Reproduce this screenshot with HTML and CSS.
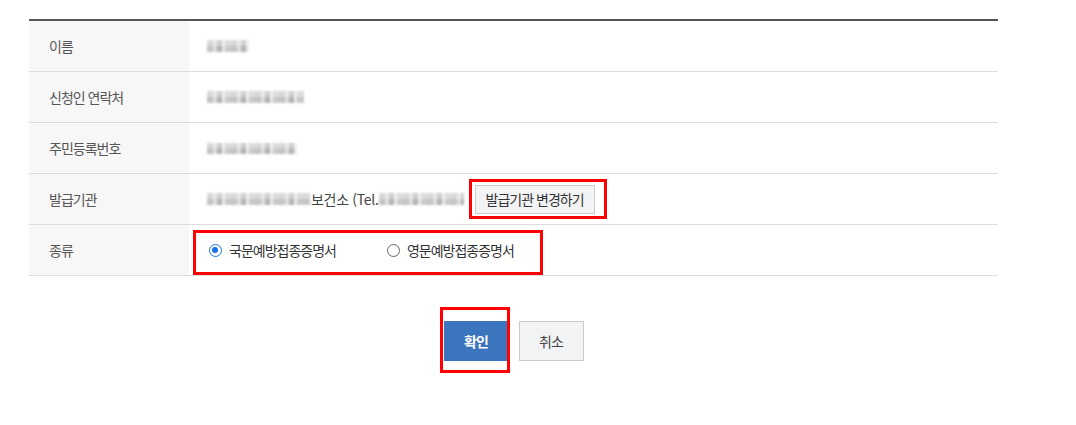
FILE: index.html
```html
<!DOCTYPE html>
<html lang="ko">
<head>
<meta charset="utf-8">
<link rel="stylesheet" href="styles.css">
</head>
<body>
<div class="wrap">
  <div class="table">
    <div class="row">
      <div class="th">이름</div>
      <div class="td"><span class="blur b-name"></span></div>
    </div>
    <div class="row">
      <div class="th">신청인 연락처</div>
      <div class="td"><span class="blur b-phone"></span></div>
    </div>
    <div class="row">
      <div class="th">주민등록번호</div>
      <div class="td"><span class="blur b-id"></span></div>
    </div>
    <div class="row">
      <div class="th">발급기관</div>
      <div class="td">
        <span class="blur b-org"></span><span class="org">보건소 (Tel.</span><span class="blur b-tel"></span>
        <span class="mark-wrap">
          <button class="btn-sm">발급기관 변경하기</button>
          <span class="mark mark-org"></span>
        </span>
      </div>
    </div>
    <div class="row">
      <div class="th">종류</div>
      <div class="td td-radio">
        <label class="radio"><span class="dot on"></span>국문예방접종증명서</label>
        <label class="radio"><span class="dot"></span>영문예방접종증명서</label>
        <span class="mark mark-radio"></span>
      </div>
    </div>
  </div>
  <div class="actions">
    <span class="mark-wrap">
      <button class="btn btn-ok">확인</button>
      <span class="mark mark-ok"></span>
    </span>
    <button class="btn btn-cancel">취소</button>
  </div>
</div>
</body>
</html>
```
FILE: styles.css
```css
* { box-sizing: border-box; }
body {
  margin: 0;
  background: #fff;
  font-family: "Noto Sans CJK KR", "Noto Sans", sans-serif;
  color: #333;
}
.wrap {
  padding-top: 19px;
  padding-bottom: 40px;
  margin-left: 29px;
  width: 969px;
}
.table {
  border-top: 2px solid #555;
}
.row {
  display: grid;
  grid-template-columns: 160px 1fr;
  height: 51px;
  border-bottom: 1px solid #ddd;
}
.th {
  background: #f7f7f7;
  display: flex;
  align-items: center;
  padding-left: 20px;
  font-size: 14px;
  color: #555;
  letter-spacing: -1px;
}
.td {
  display: flex;
  align-items: center;
  padding-left: 18px;
  font-size: 14px;
  color: #444;
  position: relative;
}
.blur {
  display: inline-block;
  height: 12px;
  filter: blur(1px);
  background:
    linear-gradient(180deg, rgba(255,255,255,0.35) 0 50%, rgba(255,255,255,0) 50% 100%),
    repeating-linear-gradient(90deg, #c4c4c4 0 6px, #dedede 6px 10px, #b4b4b4 10px 15px, #e8e8e8 15px 18px, #cacaca 18px 24px);
}
.b-name { width: 42px; }
.b-phone { width: 97px; }
.b-id { width: 90px; height: 11px; }
.b-org { width: 104px; }
.b-tel { width: 85px; margin-right: 11px; }
.org { font-size: 14px; color: #444; letter-spacing: -0.3px; }
.mark-wrap {
  position: relative;
  display: inline-flex;
}
.btn-sm {
  width: 120px;
  height: 29px;
  border: 1px solid #ccc;
  background: #f2f3f5;
  font-family: inherit;
  font-size: 14px;
  color: #333;
  padding: 0;
  letter-spacing: -1px;
}
.mark {
  position: absolute;
  border: 3px solid #f00;
  pointer-events: none;
}
.mark-org { left: -6px; top: -6px; width: 138px; height: 40px; }
.mark-radio { left: 4px; top: 5px; width: 350px; height: 45px; }
.td-radio { padding-left: 20px; }
.radio {
  display: inline-flex;
  align-items: center;
  font-size: 14px;
  letter-spacing: -1px;
  color: #333;
  margin-right: 51px;
}
.dot {
  width: 13px;
  height: 13px;
  border: 1px solid #666;
  border-radius: 50%;
  margin-right: 7px;
  position: relative;
}
.dot.on {
  border-color: #1a73e8;
  border-width: 1.5px;
}
.dot.on::after {
  content: "";
  position: absolute;
  left: 2px; top: 2px;
  width: 6px; height: 6px;
  border-radius: 50%;
  background: #1a73e8;
}
.actions {
  display: flex;
  justify-content: center;
  gap: 10px;
  margin-top: 45px;
}
.btn {
  width: 65px;
  height: 40px;
  font-family: inherit;
  font-size: 14px;
  letter-spacing: -1px;
  padding: 0;
}
.btn-ok {
  background: #3b75bd;
  border: 1px solid #3b75bd;
  color: #fff;
  font-weight: bold;
}
.btn-cancel {
  background: #f1f3f5;
  border: 1px solid #ccc;
  color: #444;
}
.mark-ok { left: -4px; top: -14px; width: 70px; height: 66px; }
```
